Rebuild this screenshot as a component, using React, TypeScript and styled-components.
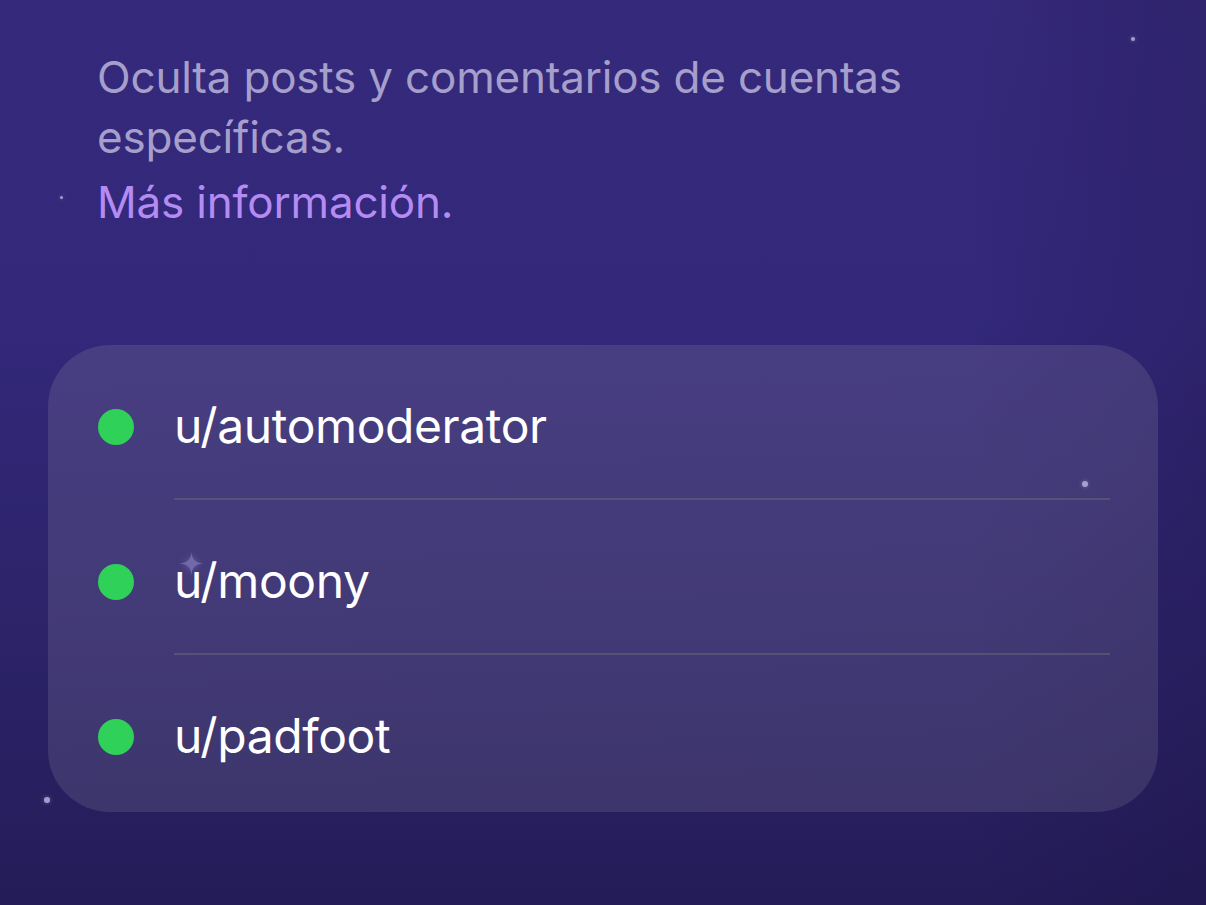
import styled, { createGlobalStyle } from 'styled-components'

const GlobalStyle = createGlobalStyle`
  html, body {
    margin: 0;
    padding: 0;
    height: 100%;
  }
  body {
    font-family: Inter, "Noto Sans", "Liberation Sans", sans-serif;
    -webkit-font-smoothing: antialiased;
  }
`

const accounts = ['u/automoderator', 'u/moony', 'u/padfoot']

const stars = [
  { x: 1133, y: 39, size: 4 },
  { x: 61, y: 197, size: 3 },
  { x: 1085, y: 484, size: 6 },
  { x: 47, y: 800, size: 6 },
]

export default function App() {
  return (
    <>
      <GlobalStyle />
      <Screen>
        {stars.map((s, i) => (
          <Star key={i} style={{ left: s.x - s.size / 2, top: s.y - s.size / 2, width: s.size, height: s.size }} />
        ))}
        <Sparkle viewBox="0 0 24 24" style={{ left: 180, top: 552 }}>
          <path d="M12 0 C12.8 8 16 11.2 24 12 C16 12.8 12.8 16 12 24 C11.2 16 8 12.8 0 12 C8 11.2 11.2 8 12 0 Z" />
        </Sparkle>
        <Intro>
          <Description>Oculta posts y comentarios de cuentas específicas.</Description>
          <MoreLink href="#">Más información.</MoreLink>
        </Intro>
        <Card>
          {accounts.map((name, i) => (
            <Row key={name}>
              <Dot />
              <RowBody last={i === accounts.length - 1}>
                <Name>{name}</Name>
              </RowBody>
            </Row>
          ))}
        </Card>
      </Screen>
    </>
  )
}

const Screen = styled.div`
  position: relative;
  width: 1206px;
  height: 905px;
  overflow: hidden;
  box-sizing: border-box;
  padding: 47px 48px 0 48px;
  background:
    linear-gradient(90deg, rgba(0, 0, 0, 0) 80%, rgba(20, 10, 50, 0.18) 100%),
    linear-gradient(180deg, #35297a 0%, #33287a 35%, #2c2369 70%, #241c58 100%);
`

const Star = styled.div`
  position: absolute;
  border-radius: 50%;
  background: #b9b3e0;
  opacity: 0.85;
  box-shadow: 0 0 4px rgba(185, 179, 224, 0.5);
`

const Sparkle = styled.svg`
  position: absolute;
  width: 23px;
  height: 23px;
  fill: #776db0;
  opacity: 0.9;
  filter: drop-shadow(0 0 3px rgba(140, 130, 200, 0.5));
`

const Intro = styled.div`
  padding-left: 49px;
  width: 830px;
`

const Description = styled.p`
  margin: 0;
  font-size: 44px;
  line-height: 60px;
  color: #a69fcb;
  letter-spacing: -0.2px;
`

const MoreLink = styled.a`
  display: block;
  margin-top: 5px;
  font-size: 44px;
  line-height: 60px;
  color: #b38bf3;
  text-decoration: none;
  letter-spacing: -0.2px;
`

const Card = styled.div`
  margin-top: 113px;
  width: 1110px;
  box-sizing: border-box;
  padding-bottom: 2px;
  border-radius: 62px;
  background: linear-gradient(170deg, rgba(135, 128, 160, 0.25) 0%, rgba(130, 125, 150, 0.24) 100%);
`

const Row = styled.div`
  display: flex;
  align-items: stretch;
  height: 155px;
  padding-left: 50px;
`

const Dot = styled.div`
  flex: 0 0 36px;
  height: 36px;
  margin-top: 64px;
  border-radius: 50%;
  background: #30d158;
`

const RowBody = styled.div<{ last?: boolean }>`
  flex: 1;
  display: flex;
  align-items: center;
  padding-top: 8px;
  margin-left: 40px;
  margin-right: 48px;
  border-bottom: 2px solid ${(p) => (p.last ? 'transparent' : 'rgba(100, 98, 120, 0.6)')};
`

const Name = styled.span`
  font-size: 48px;
  color: #ffffff;
  letter-spacing: -0.4px;
`
